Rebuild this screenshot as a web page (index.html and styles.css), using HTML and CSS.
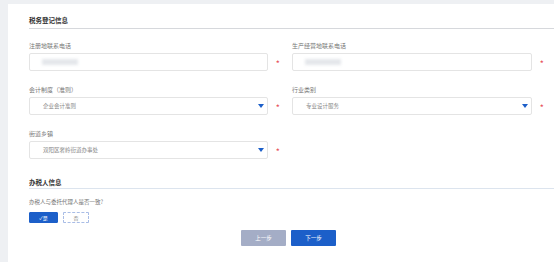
FILE: index.html
```html
<!DOCTYPE html>
<html lang="zh-CN">
<head>
    <meta charset="UTF-8">
    <title>税务登记信息</title>
    <link rel="stylesheet" href="styles.css">
</head>
<body>
    <div class="panel">
        <h2 class="section-title first">税务登记信息</h2>

        <div class="field-row">
            <div class="field">
                <label>注册地联系电话</label>
                <div class="control"><span class="masked"></span></div>
            </div>
            <span class="req">*</span>
            <div class="field">
                <label>生产经营地联系电话</label>
                <div class="control"><span class="masked"></span></div>
            </div>
            <span class="req">*</span>
        </div>

        <div class="field-row">
            <div class="field">
                <label>会计制度（准则）</label>
                <div class="control select"><span class="value">企业会计准则</span><span class="arrow"></span></div>
            </div>
            <span class="req">*</span>
            <div class="field">
                <label>行业类别</label>
                <div class="control select"><span class="value">专业设计服务</span><span class="arrow"></span></div>
            </div>
            <span class="req">*</span>
        </div>

        <div class="field-row">
            <div class="field">
                <label>街道乡镇</label>
                <div class="control select"><span class="value">双阳区奢岭街道办事处</span><span class="arrow"></span></div>
            </div>
            <span class="req">*</span>
        </div>

        <h2 class="section-title second">办税人信息</h2>

        <p class="question">办税人与委托代理人是否一致?</p>
        <div class="choice">
            <button class="opt active">✓是</button>
            <button class="opt">否</button>
        </div>

        <div class="steps">
            <button class="step prev">上一步</button>
            <button class="step next">下一步</button>
        </div>
    </div>
</body>
</html>
```

FILE: styles.css
```css
body {
    margin: 0;
    padding: 4px 0 0 8px;
    background-color: #eef0f3;
    font-family: "Noto Sans CJK SC", "Noto Sans", sans-serif;
    height: 262px;
    box-sizing: border-box;
    overflow: hidden;
}

.panel {
    background-color: #fff;
    height: 258px;
    padding-left: 21px;
    box-sizing: border-box;
}

.section-title {
    margin: 0;
    font-size: 6.5px;
    font-weight: bold;
    color: #333;
    line-height: 10px;
}

.section-title.first {
    padding-top: 11px;
    padding-bottom: 3px;
    border-bottom: 1px solid #d6d8dc;
    margin-bottom: 13px;
}

.section-title.second {
    margin-top: 18px;
    padding-bottom: 1px;
    border-bottom: 1px solid #dce4ee;
}

.field-row {
    display: grid;
    grid-template-columns: 239px 24px 240px 24px;
    margin-bottom: 15px;
}

.field label {
    display: block;
    font-size: 6px;
    line-height: 8px;
    color: #777;
    margin-bottom: 3px;
}

.control {
    height: 18px;
    border: 1px solid #e4e4e4;
    border-radius: 2px;
    box-sizing: border-box;
    display: flex;
    align-items: center;
    padding-left: 12px;
}

.masked {
    width: 36px;
    height: 6px;
    background-color: #e4e7eb;
    filter: blur(1.5px);
}

.select {
    justify-content: space-between;
    padding-left: 13px;
    padding-right: 3px;
}

.select .value {
    font-size: 5.5px;
    color: #888;
}

.arrow {
    width: 0;
    height: 0;
    border-left: 3px solid transparent;
    border-right: 3px solid transparent;
    border-top: 4px solid #1c5fc9;
}

.req {
    color: #e8515b;
    font-size: 7px;
    font-weight: bold;
    line-height: 7px;
    padding-left: 8px;
    align-self: end;
    margin-bottom: 4px;
}

.question {
    margin: 9px 0 0;
    font-size: 5.5px;
    line-height: 8px;
    color: #777;
}

.choice {
    display: flex;
    gap: 5px;
    margin-top: 6px;
}

.opt {
    width: 29px;
    height: 11px;
    padding: 0;
    font-family: inherit;
    font-size: 5px;
    border: 1px dashed #a9bde6;
    background-color: #fff;
    color: #888;
    border-radius: 1px;
}

.opt.active {
    background-color: #1c5fc9;
    border: 1px solid #1c5fc9;
    color: #fff;
}

.choice .opt:last-child {
    width: 26px;
}

.steps {
    display: flex;
    gap: 5px;
    margin-top: 7px;
    padding-left: 212px;
}

.step {
    width: 45px;
    height: 16px;
    padding: 0;
    border: none;
    border-radius: 1px;
    font-family: inherit;
    font-size: 5.5px;
    color: #fff;
}

.step.prev {
    background-color: #a4adc6;
}

.step.next {
    background-color: #1c5fc9;
}
```
